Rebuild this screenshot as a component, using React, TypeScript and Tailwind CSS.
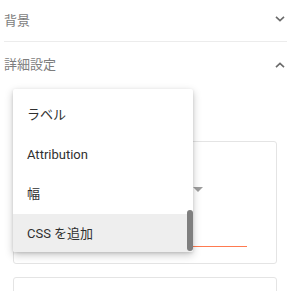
import React from 'react';

const Chevron: React.FC<{ up?: boolean }> = ({ up }) => (
    <svg width="10" height="6" viewBox="0 0 10 6" className="text-[#6b6b6b]">
        <path d={up ? 'M1 5.2L5 1.4l4 3.8' : 'M1 0.8l4 3.8 4-3.8'} fill="none" stroke="currentColor" strokeWidth="1.6" />
    </svg>
);

const items = ['ラベル', 'Attribution', '幅', 'CSS を追加'];

const App: React.FC = () => {
    return (
        <div
            className="relative w-[300px] h-[291px] overflow-hidden bg-white"
            style={{ fontFamily: 'Roboto, "Noto Sans CJK JP", sans-serif' }}
        >
            {/* Section headers */}
            <div className="ml-[4px] w-[283px]">
                <div className="h-[42px] flex items-center justify-between border-b border-[#ececec] pr-[2px]">
                    <span className="text-[13px] text-[#7d7d7d] mt-[1px]">背景</span>
                    <span className="flex -mt-[4px]"><Chevron /></span>
                </div>
                <div className="h-[47px] flex items-center justify-between pr-[2px]">
                    <span className="text-[13px] text-[#7d7d7d] -mt-[1px]">詳細設定</span>
                    <span className="flex -mt-[1px]"><Chevron up /></span>
                </div>
            </div>

            {/* Settings content behind the menu */}
            <div className="pl-[13px] pt-[52px] w-[277px]">
                <div className="h-[123px] border border-[#e4e4e4] rounded-[3px] relative">
                    <div className="absolute left-[179px] top-[45px] w-0 h-0 border-l-[5px] border-r-[5px] border-t-[5px] border-l-transparent border-r-transparent border-t-[#9e9e9e]" />
                    <div className="absolute left-[170px] top-[104px] w-[63px] h-[1px] bg-[#ff7a50]" />
                </div>
                <div className="mt-[13px] h-[40px] border border-[#e4e4e4] rounded-[3px] pl-[9px] pt-[7px]">
                    <span className="text-[11px] leading-[14px] text-[#9a9a9a]">色</span>
                </div>
            </div>

            {/* Open dropdown menu */}
            <div className="absolute left-[13px] top-[89px] w-[180px] h-[163px] bg-white rounded-[2px] shadow-[0_3px_8px_rgba(0,0,0,0.22),0_1px_3px_rgba(0,0,0,0.12)] overflow-hidden">
                <div className="pt-[6px]">
                    {items.map((label, i) => (
                        <div
                            key={label}
                            className={`h-[39.6px] flex items-center pl-[14px] text-[13px] text-[#303030] ${i === 3 ? 'bg-[#eeeeee]' : 'bg-white'}`}
                        >
                            <span className="text-[#303030]">{label}</span>
                        </div>
                    ))}
                </div>
                <div className="absolute right-0 top-[121px] w-[6px] h-[41px] rounded-[3px] bg-[#7f7f7f]" />
            </div>
        </div>
    );
};

export default App;
